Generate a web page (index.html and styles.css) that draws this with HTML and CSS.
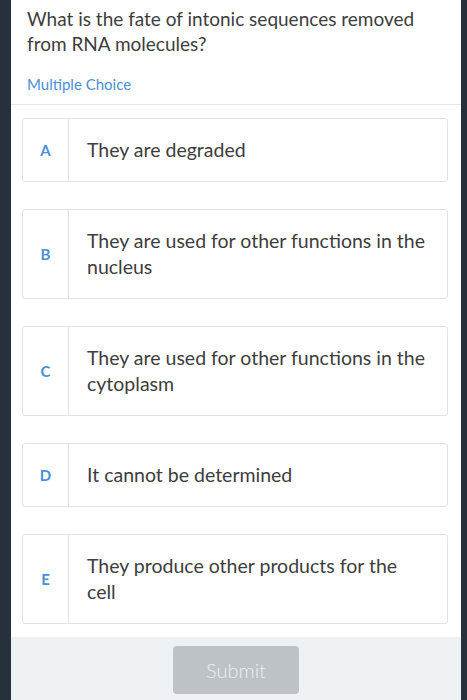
FILE: index.html
```html
<!DOCTYPE html>
<html lang="en">
<head>
    <meta charset="UTF-8">
    <title>Multiple Choice</title>
    <link rel="stylesheet" href="styles.css">
</head>
<body>
    <div class="panel">
        <div class="question">
            <p class="prompt">What is the fate of intonic sequences removed from RNA molecules?</p>
            <p class="kind">Multiple Choice</p>
        </div>
        <div class="choices">
            <div class="choice">
                <div class="letter">A</div>
                <div class="answer">They are degraded</div>
            </div>
            <div class="choice">
                <div class="letter">B</div>
                <div class="answer">They are used for other functions in the nucleus</div>
            </div>
            <div class="choice">
                <div class="letter">C</div>
                <div class="answer">They are used for other functions in the cytoplasm</div>
            </div>
            <div class="choice">
                <div class="letter">D</div>
                <div class="answer">It cannot be determined</div>
            </div>
            <div class="choice">
                <div class="letter">E</div>
                <div class="answer">They produce other products for the cell</div>
            </div>
        </div>
        <div class="footer">
            <button class="submit" disabled>Submit</button>
        </div>
    </div>
</body>
</html>
```

FILE: styles.css
```css
body { margin: 0; background-color: #26313b; font-family: Lato, "Noto Sans", sans-serif; color: #3d3d3d; }
.panel { margin: 0 6px 0 11px; height: 700px; background: white; display: flex; flex-direction: column; }
.question { padding: 6px 16px 0 16px; border-bottom: 1px solid #e6e6e6; }
.prompt { margin: 0; font-size: 19px; line-height: 25px; }
.kind { margin: 17px 0 0; padding-bottom: 9px; font-size: 15px; line-height: 22px; color: #4a90d9; }
.choices { padding: 13px 13px 13px 11px; display: flex; flex-direction: column; gap: 27px; }
.choice { display: flex; border: 1px solid #e2e2e2; border-radius: 3px; }
.letter { width: 45px; flex: none; display: flex; align-items: center; justify-content: center; border-right: 1px solid #e2e2e2; font-size: 15px; font-weight: bold; color: #4a90d9; }
.answer { padding: 18px 19px 18px 18px; font-size: 19.5px; line-height: 26px; }
.footer { flex: 1; background-color: #eef1f4; display: flex; justify-content: center; padding-top: 9px; }
.submit { width: 126px; height: 48px; font-family: inherit; font-size: 20px; font-weight: 300; color: #eceff1; background-color: #bcc2c6; border: none; border-radius: 4px; }
```
